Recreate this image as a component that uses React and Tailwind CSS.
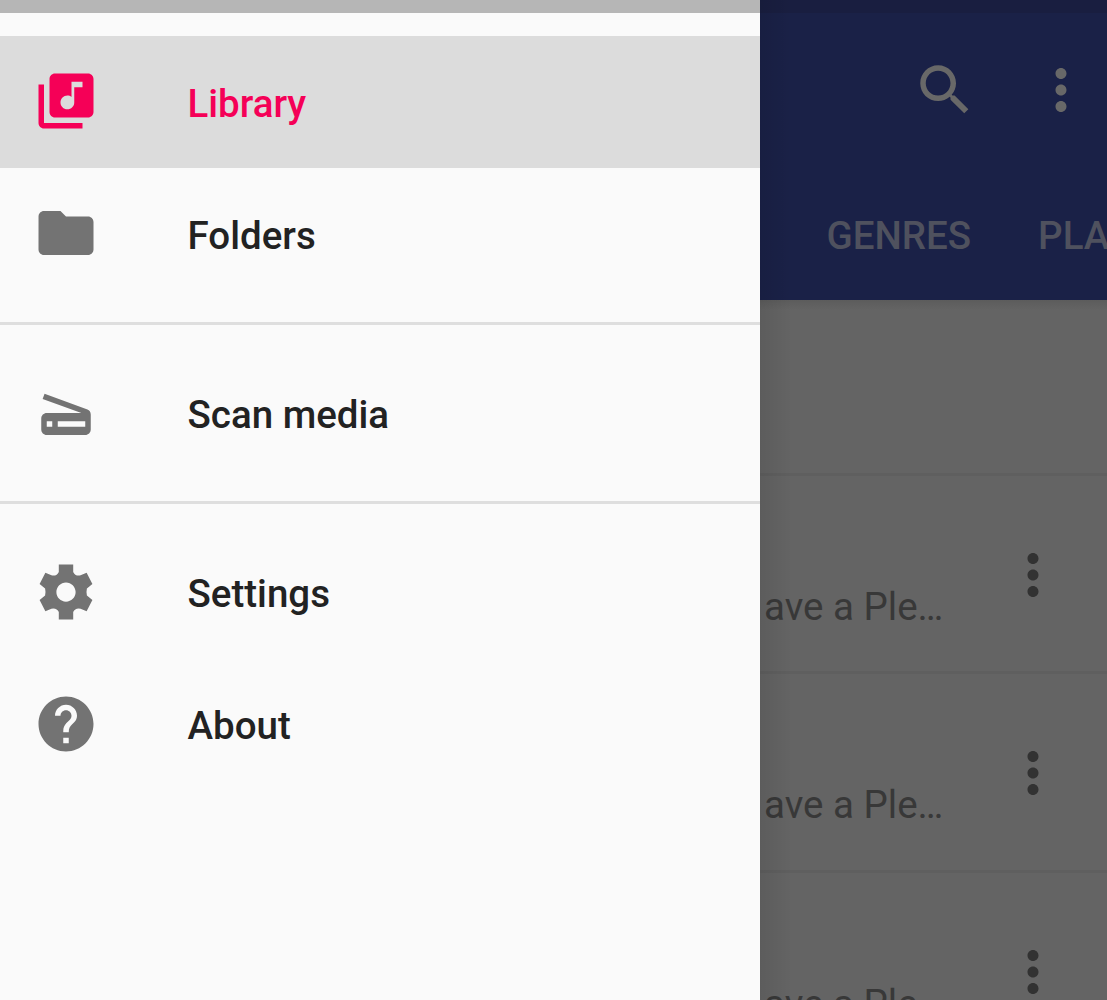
const ICONS = {
  library:
    'M20 2H8c-1.1 0-2 .9-2 2v12c0 1.1.9 2 2 2h12c1.1 0 2-.9 2-2V4c0-1.1-.9-2-2-2zm-2 5h-3v5.5c0 1.38-1.12 2.5-2.5 2.5S10 13.88 10 12.5s1.12-2.5 2.5-2.5c.57 0 1.08.19 1.5.51V5h4v2zM4 6H2v14c0 1.1.9 2 2 2h14v-2H4V6z',
  folder:
    'M10 4H4c-1.1 0-1.99.9-1.99 2L2 18c0 1.1.9 2 2 2h16c1.1 0 2-.9 2-2V8c0-1.1-.9-2-2-2h-8l-2-2z',
  scanner:
    'M19.8 10.7L4.2 5l-.7 1.9L17.6 12H5c-1.1 0-2 .9-2 2v4c0 1.1.9 2 2 2h14c1.1 0 2-.9 2-2v-5.5c0-.8-.5-1.6-1.2-1.8zM7 17H5v-2h2v2zm12 0H9v-2h10v2z',
  settings:
    'M19.6 13.3Q19.3 12 19.6 10.7L21.6 9.1L19.5 5L17.3 5.95Q15.3 6.3 14.62 4.7V2H9.38V4.7Q8.7 6.3 6.7 5.95L4.5 5L2.4 9.1L4.4 10.7Q4.7 12 4.4 13.3L2.4 14.9L4.5 19L6.7 18.05Q8.7 17.7 9.38 19.3V22H14.62V19.3Q15.3 17.7 17.3 18.05L19.5 19L21.6 14.9zM12 15.5c-1.93 0-3.5-1.57-3.5-3.5s1.57-3.5 3.5-3.5 3.5 1.57 3.5 3.5-1.57 3.5-3.5 3.5z',
  help:
    'M12 2C6.48 2 2 6.48 2 12s4.48 10 10 10 10-4.48 10-10S17.52 2 12 2zm1 17h-2v-2h2v2zm2.07-7.75l-.9.92C13.45 12.9 13 13.5 13 15h-2v-.5c0-1.1.45-2.1 1.17-2.83l1.24-1.26c.37-.36.59-.86.59-1.41 0-1.1-.9-2-2-2s-2 .9-2 2H8c0-2.21 1.79-4 4-4s4 1.79 4 4c0 .88-.36 1.68-.93 2.25z',
  search:
    'M15.5 14h-.79l-.28-.27C15.41 12.59 16 11.11 16 9.5 16 5.91 13.09 3 9.5 3S3 5.91 3 9.5 5.91 16 9.5 16c1.61 0 3.09-.59 4.23-1.57l.27.28v.79l5 4.99L20.49 19l-4.99-5zm-6 0C7.01 14 5 11.99 5 9.5S7.01 5 9.5 5 14 7.01 14 9.5 11.99 14 9.5 14z',
  more:
    'M12 8c1.1 0 2-.9 2-2s-.9-2-2-2-2 .9-2 2 .9 2 2 2zm0 2c-1.1 0-2 .9-2 2s.9 2 2 2 2-.9 2-2-.9-2-2-2zm0 6c-1.1 0-2 .9-2 2s.9 2 2 2 2-.9 2-2-.9-2-2-2z',
};

function Icon({ name, className = '' }) {
  return (
    <svg viewBox="0 0 24 24" fill="currentColor" className={`size-[66px] shrink-0 ${className}`}>
      <path d={ICONS[name]} />
    </svg>
  );
}

function NavItem({ icon, label, active }) {
  return (
    <a
      className={`flex h-[132.2px] shrink-0 items-center pl-[33px] ${
        active ? 'bg-[#dcdcdc] text-[#f50057]' : 'text-[#222222]'
      }`}
    >
      <Icon name={icon} className={`-mt-[1px] ${active ? '' : 'text-[#737373]'}`} />
      <span className="ml-[88.5px] pt-[4px] leading-[46px]">{label}</span>
    </a>
  );
}

function Divider() {
  return <div className="my-[22px] h-[3px] shrink-0 bg-[#dedede]" />;
}

function Drawer() {
  return (
    <nav className="flex h-full w-[760px] shrink-0 flex-col bg-[#fafafa] font-medium">
      <div className="h-[13px] shrink-0 bg-[#b6b6b6]" />
      <div className="h-[22.6px] shrink-0" />
      <NavItem icon="library" label="Library" active />
      <NavItem icon="folder" label="Folders" />
      <Divider />
      <NavItem icon="scanner" label="Scan media" />
      <Divider />
      <NavItem icon="settings" label="Settings" />
      <NavItem icon="help" label="About" />
    </nav>
  );
}

function ListRow() {
  return (
    <div className="flex h-[198.4px] shrink-0 justify-between border-t-[3px] border-[#5f5f5f] pl-[4px] pr-[41px]">
      <span className="mt-[108px] leading-[46px] text-[#383838]">ave a Ple…</span>
      <Icon name="more" className="mt-[66px] text-[#323232]" />
    </div>
  );
}

function Content() {
  return (
    <main className="relative flex h-full min-w-0 flex-1 flex-col overflow-hidden bg-[#646464]">
      <header className="flex h-[299.5px] shrink-0 flex-col bg-[#1a2147]">
        <div className="h-[13px] bg-[#191e40]" />
        <div className="flex h-[154px] items-center justify-end pr-[13px] text-[#686868]">
          <Icon name="search" />
          <Icon name="more" className="ml-[50px]" />
        </div>
        <div className="flex gap-[67px] pl-[66.5px] pt-[46px] font-medium leading-[46px] text-[#4f515e]">
          <span>GENRES</span>
          <span>PLAYLISTS</span>
        </div>
      </header>
      <div className="h-[10px] shrink-0 bg-gradient-to-b from-[#5c5c5c] to-[#646464]" />
      <div className="h-[163.5px] shrink-0" />
      <ListRow />
      <ListRow />
      <ListRow />
      <div className="absolute inset-y-0 left-0 w-[32px] bg-gradient-to-r from-black/8 to-transparent" />
    </main>
  );
}

export default function App() {
  return (
    <div className="flex h-[1000px] w-[1107px] overflow-hidden font-['Roboto',sans-serif] text-[38.5px]">
      <Drawer />
      <Content />
    </div>
  );
}
